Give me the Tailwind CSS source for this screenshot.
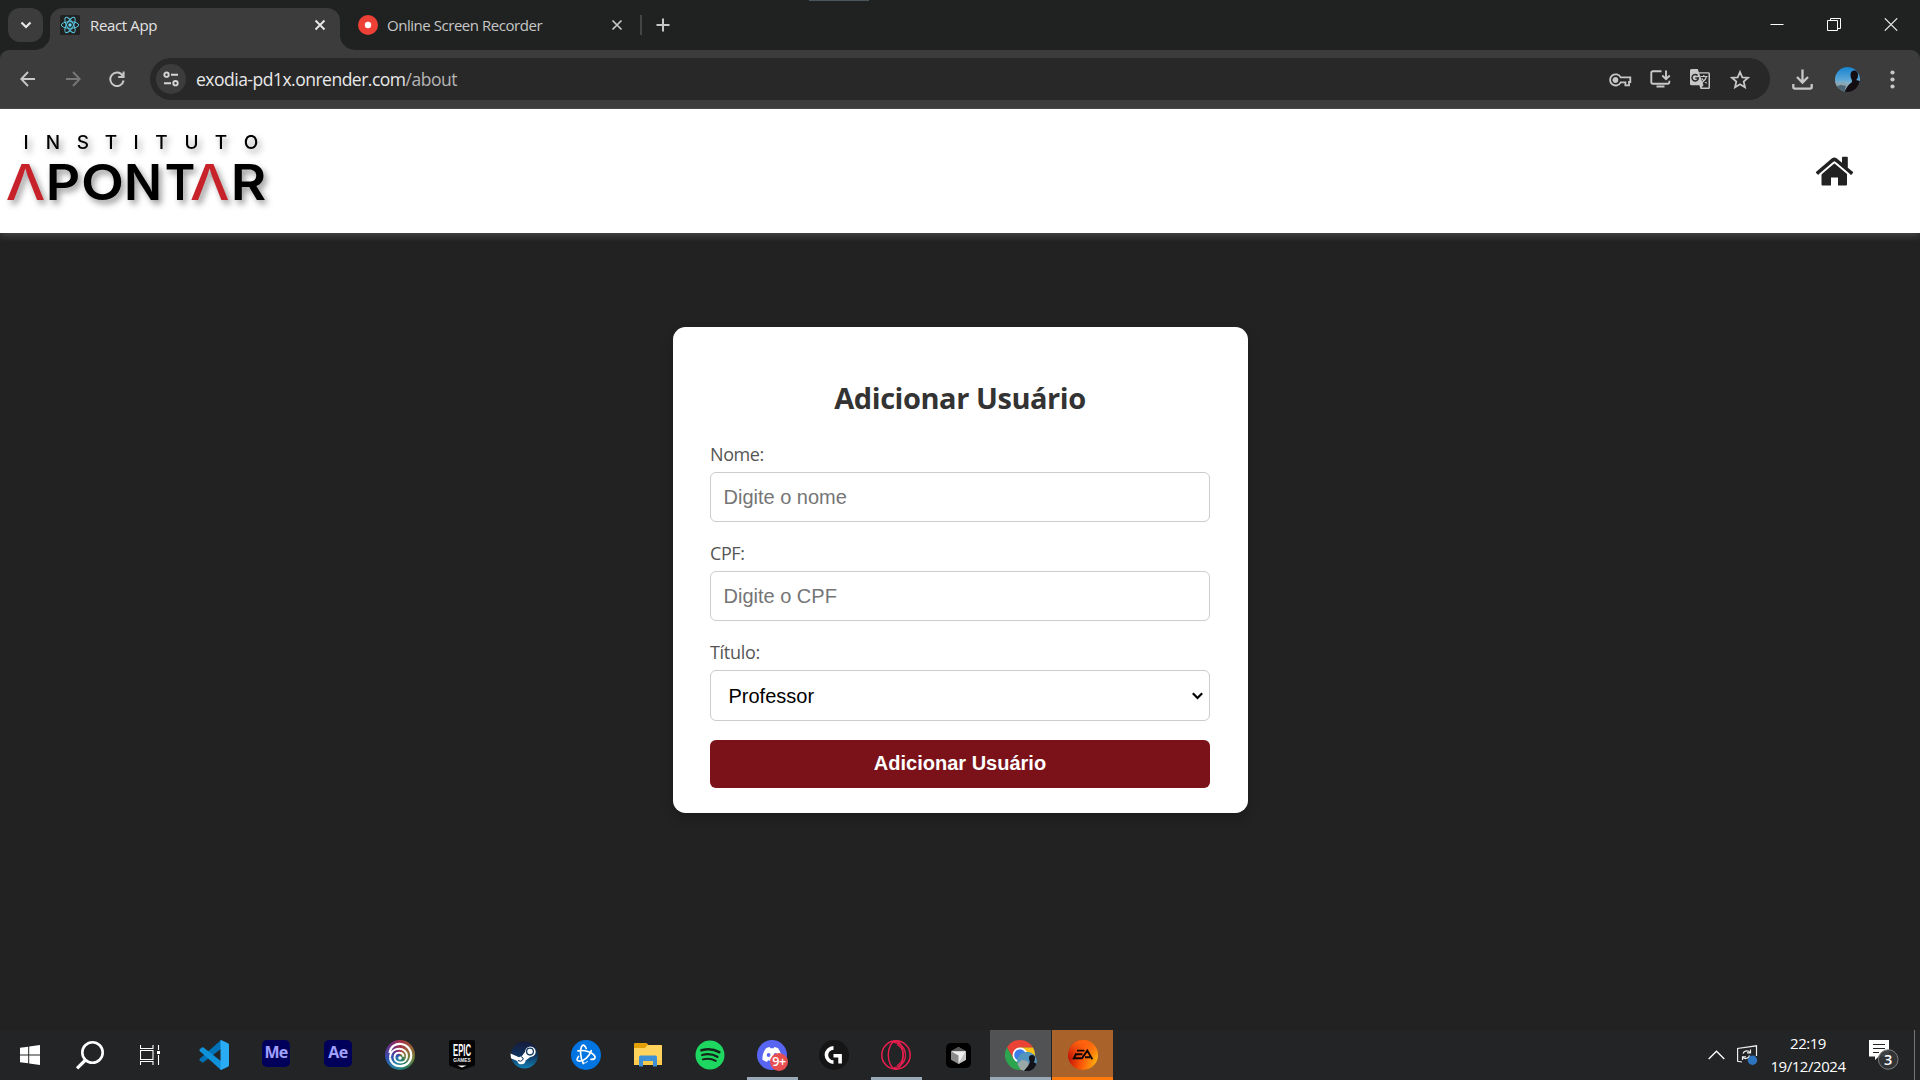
<!DOCTYPE html>
<html lang="pt-BR">
<head>
<meta charset="utf-8">
<title>React App</title>
<script src="https://cdn.jsdelivr.net/npm/@tailwindcss/browser@4"></script>
</head>
<body class="w-[1920px] h-[1080px] overflow-hidden bg-[#222] flex flex-col font-['Open_Sans','Noto_Sans',sans-serif] relative">

<!-- tab strip -->
<div class="h-[50px] shrink-0 bg-[#202222] flex items-start relative">
  <div class="absolute left-[809px] top-0 w-[60px] h-px bg-[#4b555c]"></div>
  <button class="ml-2 mt-2 w-[35px] h-[34px] rounded-[12px] bg-[#3c3c3c] flex items-center justify-center">
    <svg width="12" height="8" viewBox="0 0 12 8" fill="none" stroke="#e8e8e8" stroke-width="2.2"><path d="M1.5 1.5 6 6l4.500-4.500"/></svg>
  </button>
  <div class="ml-[7px] mt-2 w-[290px] h-[42px] rounded-t-[13px] bg-[#3c3c3c] flex items-center relative pb-2">
    <svg class="absolute -left-[15px] bottom-0" width="15" height="15"><path d="M15 0A15 15 0 0 1 0 15H15Z" fill="#3c3c3c"/></svg>
    <svg class="absolute -right-[15px] bottom-0" width="15" height="15"><path d="M0 0A15 15 0 0 0 15 15H0Z" fill="#3c3c3c"/></svg>
    <svg class="ml-[10px]" width="20" height="20" viewBox="0 0 20 20"><rect width="20" height="20" rx="1.500" fill="#222"/><g fill="none" stroke="#58c4dc" stroke-width="1"><ellipse cx="10" cy="10" rx="8.700" ry="3.300"/><ellipse cx="10" cy="10" rx="8.700" ry="3.300" transform="rotate(60 10 10)"/><ellipse cx="10" cy="10" rx="8.700" ry="3.300" transform="rotate(120 10 10)"/></g><circle cx="10" cy="10" r="1.700" fill="#61dafb"/></svg>
    <span class="ml-[10px] w-[200px] text-[15px] leading-5 text-[#e3e3e3] tracking-[-0.35px]">React App</span>
    <svg class="ml-[24px]" width="12" height="12" viewBox="0 0 12 12" stroke="#e8e8e8" stroke-width="1.900"><path d="M1.500 1.500l9 9M10.500 1.500l-9 9"/></svg>
  </div>
  <div class="ml-[18px] mt-2 h-[34px] flex items-center">
    <svg width="20" height="20" viewBox="0 0 20 20"><circle cx="10" cy="10" r="10" fill="#ee4136"/><circle cx="10" cy="10" r="3.200" fill="#fff"/></svg>
    <span class="ml-[9px] w-[201px] text-[15px] leading-5 text-[#c7c7c7] tracking-[-0.46px] whitespace-nowrap">Online Screen Recorder</span>
    <svg class="ml-[23px]" width="12" height="12" viewBox="0 0 12 12" stroke="#c7c7c7" stroke-width="1.700"><path d="M1.500 1.500l9 9M10.500 1.500l-9 9"/></svg>
    <div class="ml-[17px] w-[2px] h-5 bg-[#454545]"></div>
    <svg class="ml-[14px]" width="14" height="14" viewBox="0 0 14 14" stroke="#c7c7c7" stroke-width="2"><path d="M7 .5v13M.5 7h13"/></svg>
  </div>
  <div class="ml-auto mr-[22px] mt-[18px] flex items-center gap-[43px]">
    <svg width="14" height="13" viewBox="0 0 14 13"><path d="M.5 6.500h13" stroke="#fff"/></svg>
    <svg width="14" height="13" viewBox="0 0 14 13" fill="none" stroke="#fff"><path d="M.5 2.500h10v10H.5zM3.500 2.500V.5h10v10h-3"/></svg>
    <svg width="14" height="13" viewBox="0 0 14 13" stroke="#e5e5e5" stroke-width="1.200"><path d="M.8.300l12.400 12.400M13.200.300.800 12.700"/></svg>
  </div>
</div>

<!-- toolbar -->
<div class="bg-[#202222] shrink-0">
<div class="h-[59px] rounded-t-[9px] bg-[#3c3c3c] border-b border-[#484546] flex items-center relative">
  <svg class="ml-5" width="16" height="16" viewBox="0 0 16 16" fill="none" stroke="#c7c7c7" stroke-width="1.900"><path d="M15 8H1.500M8 1 1.300 8 8 15"/></svg>
  <svg class="ml-[29px]" width="16" height="16" viewBox="0 0 16 16" fill="none" stroke="#777" stroke-width="1.900"><path d="M1 8h13.500M8 1l6.700 7L8 15"/></svg>
  <svg class="ml-[28px]" width="16" height="16" viewBox="0 0 16 16" fill="none" stroke="#c7c7c7" stroke-width="2"><path d="M13.600 4.600A6.700 6.700 0 1 0 14.600 9.500M14.600.5v5.400H9.200"/></svg>
  <div class="ml-[25px] w-[1620px] h-[42px] rounded-full bg-[#282828] flex items-center">
    <div class="ml-[6px] w-[30px] h-[30px] rounded-full bg-[#3c3c3c] flex items-center justify-center">
      <svg width="16" height="16" viewBox="0 0 16 16" fill="none" stroke="#d5d5d5" stroke-width="1.900"><circle cx="3.500" cy="3.700" r="2.200"/><path d="M8 3.700h7M1 12.200h7"/><circle cx="12.500" cy="12.200" r="2.200"/></svg>
    </div>
    <span class="ml-[10px] w-[1402px] text-[17.5px] leading-6 tracking-[-0.5px] text-[#e8e8e8] whitespace-nowrap">exodia-pd1x.onrender.com<span class="text-[#b5b5b5]">/about</span></span>
    <svg class="mt-px ml-[11px]" width="23" height="14" viewBox="0 0 23 14" fill="none" stroke="#c7c7c7" stroke-width="1.800"><path d="M11.700 4.400H21.300V9H20v3.300h-3.600V9.400h-4.700A5.600 5.600 0 1 1 11.700 4.400Z"/><circle cx="6.400" cy="7" r="2" fill="#c7c7c7"/></svg>
    <svg class="ml-[18px]" width="21" height="18" viewBox="0 0 21 18" fill="none" stroke="#c7c7c7" stroke-width="1.900"><path d="M11.500 1.300H2.800a1.500 1.500 0 0 0-1.500 1.500v9.500a1.500 1.500 0 0 0 1.500 1.500h15a1.500 1.500 0 0 0 1.500-1.500v-1.500M16 .500v8.200M12.300 5.500 16 9.200l3.700-3.700M6.500 16.500h8"/></svg>
    <svg class="ml-[18px]" width="22" height="22" viewBox="0 0 22 22"><path d="M2.500 1h6.300l1 3.200h9.700A1.500 1.500 0 0 1 21 5.700v13.800a1.500 1.500 0 0 1-1.500 1.500h-8l-1.200-3.800H2.500A1.500 1.500 0 0 1 1 15.700V2.500A1.500 1.500 0 0 1 2.500 1Z" fill="#c7c7c7"/><path d="M10.300 5.500h9.200v14h-7l2-2.200Z" fill="#282828"/><path d="M8.600 7.600a3.200 3.200 0 1 0 .8 2.400H6.300" fill="none" stroke="#282828" stroke-width="1.500"/><path d="M11.500 8.500h7M14.800 7v1.500M17.500 8.500c-.6 2.500-2.400 4.700-4.500 6.200M12.800 10.200c1 2 2.600 3.700 5 5" fill="none" stroke="#c7c7c7" stroke-width="1.200"/></svg>
    <svg class="ml-[19px]" width="20" height="19" viewBox="0 0 20 19" fill="none" stroke="#c7c7c7" stroke-width="1.800"><path d="M10 2l2.300 5.300 5.800.5-4.400 3.800 1.300 5.700-5-3-5 3 1.300-5.700L1.900 7.800l5.800-.5Z"/></svg>
  </div>
  <svg class="ml-[22px]" width="21" height="21" viewBox="0 0 21 21" fill="none" stroke="#c7c7c7" stroke-width="2.300"><path d="M10.500.500v12.500M5 8l5.500 5.500L16 8M1.300 15v3a1.600 1.600 0 0 0 1.600 1.600h15.200a1.600 1.600 0 0 0 1.600-1.600v-3"/></svg>
  <svg class="ml-[22px]" width="25" height="25" viewBox="0 0 25 25"><defs><clipPath id="av"><circle cx="12.500" cy="12.500" r="12.500"/></clipPath><linearGradient id="sky" x2="0" y2="1"><stop stop-color="#1583cf"/><stop offset=".5" stop-color="#5ba6d6"/><stop offset=".75" stop-color="#9db9c4"/><stop offset="1" stop-color="#304454"/></linearGradient></defs><g clip-path="url(#av)"><path d="M0 0h25v25H0z" fill="url(#sky)"/><path d="M0 14l4 2 4-1 4 2 3 2-4 6H2z" fill="#8aa5b0"/><path d="M2 19l4-1 5 1-2 6H3z" fill="#4c6675"/><path d="M15.500 8q0-4.500 3.800-4.500T23 8q0 4-2 5l4 1v11H9l4.500-7 3.500-3V13q-1.500-2-1.500-5Z" fill="#130d12"/></g></svg>
  <svg class="ml-[30px]" width="5" height="19" viewBox="0 0 5 19" fill="#c7c7c7"><circle cx="2.500" cy="2.500" r="2.100"/><circle cx="2.500" cy="9.500" r="2.100"/><circle cx="2.500" cy="16.500" r="2.100"/></svg>
</div>
</div>

<!-- site header -->
<header class="h-[124px] shrink-0 bg-white shadow-[0_2px_8px_rgba(255,255,255,0.2)] flex justify-between">
  <svg class="drop-shadow-[3px_4px_3px_rgba(0,0,0,0.4)]" width="300" height="124" viewBox="0 109 300 124" font-family="Inter, sans-serif">
    <text y="149.300" font-size="19" font-weight="500" text-anchor="middle"><tspan x="26">I</tspan><tspan x="53">N</tspan><tspan x="83">S</tspan><tspan x="111">T</tspan><tspan x="136">I</tspan><tspan x="161.500">T</tspan><tspan x="191.500">U</tspan><tspan x="221">T</tspan><tspan x="251">O</tspan></text>
    <g font-size="50" font-weight="600">
      <text x="5.700" y="199.500" fill="#c7222a" font-weight="500" textLength="39.500" lengthAdjust="spacingAndGlyphs">Λ</text>
      <text x="45.800" y="199.500" textLength="34.500" lengthAdjust="spacingAndGlyphs">P</text>
      <text x="81" y="199.500" textLength="43" lengthAdjust="spacingAndGlyphs">O</text>
      <text x="124" y="199.500" textLength="38" lengthAdjust="spacingAndGlyphs">N</text>
      <text x="164.800" y="199.500" textLength="30.500" lengthAdjust="spacingAndGlyphs">T</text>
      <text x="190" y="199.500" fill="#c7222a" font-weight="500" textLength="39.500" lengthAdjust="spacingAndGlyphs">Λ</text>
      <text x="230.800" y="199.500" textLength="35.500" lengthAdjust="spacingAndGlyphs">R</text>
    </g>
  </svg>
  <svg class="mt-[47px] mr-[66px]" width="39" height="32" viewBox="0 0 39 32" fill="#222"><path d="M6.500 16.500 19.500 6.200l12.500 10.300V28.500a1 1 0 0 1-1 1h-8V21.500h-7v8h-8.500a1 1 0 0 1-1-1Z"/><path d="M1.200 15.800 17 2.300q2.300-1.800 4.600 0l5.400 4.400V1.500a.8.800 0 0 1 .8-.8h4.200a.8.800 0 0 1 .8.800v10.200l5 4.100q.7.600.1 1.300l-1.500 1.700q-.6.600-1.300 0L20 5.800q-.6-.5-1.200 0L4 18.600q-.7.600-1.300 0L1.100 17Q.5 16.400 1.200 15.800Z"/><path d="M4 19.300 18.700 6.800q.7-.6 1.400 0L35 19.300" fill="none" stroke="#fff" stroke-width="1.800"/></svg>
</header>

<!-- user form -->
<main class="flex-1 flex flex-col items-center pt-[94px]">
  <form class="w-[575px] h-[486px] bg-white rounded-[12.5px] shadow-[0_5px_12px_rgba(0,0,0,0.2)] px-[37.5px] pt-[51px] flex flex-col">
    <h2 class="text-center text-[29px] leading-10 font-bold text-[#333] tracking-[-0.45px]">Adicionar Usuário</h2>
    <label class="mt-[24px] h-[25px] text-[18px] leading-[25px] text-[#555] tracking-[-0.4px]">Nome:</label>
    <input class="mt-[5px] h-[50px] border border-[#ccc] rounded-[6px] px-[12.5px] font-['Liberation_Sans',sans-serif] text-[20px] placeholder:text-[#757575]" placeholder="Digite o nome">
    <label class="mt-[19px] h-[25px] text-[18px] leading-[25px] text-[#555] tracking-[-0.4px]">CPF:</label>
    <input class="mt-[5px] h-[50px] border border-[#ccc] rounded-[6px] px-[12.5px] font-['Liberation_Sans',sans-serif] text-[20px] placeholder:text-[#757575]" placeholder="Digite o CPF">
    <label class="mt-[19px] h-[25px] text-[18px] leading-[25px] text-[#555] tracking-[-0.3px]">Título:</label>
    <div class="mt-[5px] h-[51px] shrink-0 border border-[#ccc] rounded-[6px] pl-[17.5px] pr-[6px] flex items-center justify-between font-['Liberation_Sans',sans-serif] text-[20px] text-black">Professor
      <svg width="11" height="8" viewBox="0 0 11 8" fill="none" stroke="#000" stroke-width="2.200"><path d="M.8 1.300l4.700 4.700 4.700-4.700"/></svg>
    </div>
    <button class="mt-[19px] h-[48px] shrink-0 rounded-[6px] bg-[#7b1119] text-white font-bold text-[20px] font-['Liberation_Sans',sans-serif] pb-[2px]" type="button">Adicionar Usuário</button>
  </form>
</main>

<!-- taskbar -->
<footer class="h-[50px] shrink-0 bg-[#222426] flex text-white">
  <div class="w-[60px] flex items-center justify-center"><svg width="20" height="20" viewBox="0 0 20 20" fill="#fff"><path d="M0 2.800 8.200 1.700V9.500H0zM9.200 1.500 20 0v9.500H9.200zM0 10.500h8.200v7.800L0 17.200zM9.200 10.500H20V20L9.200 18.500z"/></svg></div>
  <div class="w-[60px] flex items-center justify-center"><svg width="30" height="30" viewBox="0 0 30 30" fill="none" stroke="#fff" stroke-width="2.600"><circle cx="17.500" cy="12.500" r="10.200"/><path d="M10.500 20 2 28.300" stroke-width="3.200"/></svg></div>
  <div class="w-[61px] mr-[2px] flex items-center justify-center"><svg width="21" height="20" viewBox="0 0 21 20" fill="none" stroke="#fff" stroke-width="1.100"><path d="M.5 0v3.500h12.500V0M.5 20v-3.500h12.500V20M.5 5.500h12.500v9H.5zM18.500 0v5M18.500 10v10"/><path d="M17 6h3v3h-3z" fill="#fff" stroke="none"/></svg></div>
  <div class="w-[62px] flex items-center justify-center"><svg width="30" height="30" viewBox="0 0 30 30"><path d="M22 0 1 18.500q-1.300 1.200 0 2.300l1.800 1.500q.8.600 1.700 0L22.500 8.500z" fill="#0072b8"/><path d="M22 30 1 11.300Q-.2 10.200 1 9.100l1.800-1.600q.8-.6 1.700 0L22.500 21.500z" fill="#0f92da"/><path d="M22 30q-.8-.5-.5-1.500V1.500Q21.300.400 22 0l7 3.300q1 .5 1 1.600v20.200q0 1.100-1 1.600z" fill="#29acf3"/></svg></div>
  <div class="w-[62px] flex items-center justify-center"><div class="w-[28px] h-[27px] mb-[3px] rounded-[5px] bg-[#00005b] text-[#a0a0ff] text-[16px] font-bold leading-[25px] text-center tracking-[-0.8px]">Me</div></div>
  <div class="w-[62px] flex items-center justify-center"><div class="w-[28px] h-[27px] mb-[3px] rounded-[5px] bg-[#00005b] text-[#a0a0ff] text-[16px] font-bold leading-[25px] text-center tracking-[-0.5px]">Ae</div></div>
  <!-- Ubisoft -->
  <div class="w-[62px] flex items-center justify-center"><div class="w-[30px] h-[30px] rounded-full bg-[conic-gradient(#a53048,#9a5b35,#74803a,#287d63,#2585a8,#314fae,#68308c,#a53048)]"><svg width="30" height="30" viewBox="0 0 30 30" fill="none" stroke="#fff"><path d="M4.500 13C5.500 6 11 3.500 16 4c6 .5 10.200 5.500 10.200 11.500 0 6-4.700 10.700-11 10.700C9 26.200 5 22 5 17.500" stroke-width="2.200"/><path d="M5 17.500C5 12 9 8.800 14 8.800c4.500 0 8 3 8 7.200s-3 6.500-6.500 6.500-6-2-6-5 2-4.700 4.700-4.700 4.300 1.600 4.300 4" stroke-width="1.900"/><circle cx="15" cy="18" r="1.800" fill="#fff" stroke="none"/></svg></div></div>
  <!-- Epic Games -->
  <div class="w-[62px] flex items-center justify-center"><svg width="26" height="30" viewBox="0 0 26 30"><path d="M2 0h22a2 2 0 0 1 2 2v22.500q0 1-1 1.500L13 30 1 26q-1-.5-1-1.500V2a2 2 0 0 1 2-2Z" fill="#050505"/><text x="4" y="15.500" font-family="Liberation Sans" font-weight="700" font-size="16" fill="#fff" textLength="18" lengthAdjust="spacingAndGlyphs">EPIC</text><text x="4.200" y="21.800" font-family="Liberation Sans" font-weight="700" font-size="5" fill="#eee" textLength="17.500" lengthAdjust="spacingAndGlyphs">GAMES</text><path d="M8.500 25.500h9L13 27.500z" fill="#fff"/></svg></div>
  <!-- Steam -->
  <div class="w-[62px] flex items-center justify-center"><svg width="30" height="30" viewBox="0 0 30 30"><defs><linearGradient id="st" x2="0" y2="1"><stop stop-color="#151a3c"/><stop offset=".5" stop-color="#10335c"/><stop offset="1" stop-color="#1282b5"/></linearGradient></defs><circle cx="15.500" cy="15" r="13.500" fill="url(#st)"/><path d="M1.500 13.500 10 17.200q1.500-.8 2.600-.6l3.500-4.800a5.300 5.300 0 1 1 5.200 5.300l-4.700 3.300A4.200 4.200 0 0 1 8.300 21L2 18.300Z" fill="#fff"/><circle cx="21" cy="11.600" r="3.400" fill="#fff" stroke="#14395f" stroke-width="1.300"/><path d="M9 20.500q3 1.800 4.700-.5t-1.500-3.300" fill="none" stroke="#14395f"/></svg></div>
  <!-- Battle.net -->
  <div class="w-[62px] flex items-center justify-center"><svg width="30" height="30" viewBox="0 0 30 30" fill="none" stroke="#fff"><circle cx="15" cy="15" r="15" fill="#0074e0" stroke="none"/><g stroke-width="1.700" stroke-linecap="round"><path d="M12.300 23.500C9.200 18 8.600 9 11.200 5.700c1.500-1.500 3 .3 4 2.800"/><path d="M7 10.800c7-1.300 15.500 2 17 6 .7 2-1.500 2.700-4 2.500"/><path d="M20.300 10.500C18.500 16.500 12.500 21.800 7.500 21c-2.200-.5-1.500-2.700 0-4.500"/><path d="M12.300 23.500q2.500-.5 4.200-2" stroke-width="1"/></g></svg></div>
  <!-- File Explorer -->
  <div class="w-[62px] flex items-center justify-center"><svg width="28" height="24" viewBox="0 0 28 24"><path d="M0 1q0-1 1-1h11.500l2 2H27q1 0 1 1v5H0z" fill="#e3a007"/><path d="M0 5h11l2.500-3H27q1 0 1 1v19H0z" fill="#ffd35c"/><path d="M0 17h28v5H0z" fill="#fcca4c"/><path d="M5 23.500V14q0-1.500 1.500-1.500h15q1.500 0 1.500 1.500v9.500h-4V18h-10v5.500z" fill="#3e91d6"/></svg></div>
  <!-- Spotify -->
  <div class="w-[62px] flex items-center justify-center"><svg width="30" height="30" viewBox="0 0 30 30" fill="none" stroke="#16251b" stroke-linecap="round"><circle cx="15" cy="15" r="14.500" fill="#1ed760" stroke="none"/><path d="M6.500 10.300c6-1.700 12.500-1.200 17.700 1.900" stroke-width="2.700"/><path d="M7.200 15c5.300-1.500 10.700-.9 15.200 1.800" stroke-width="2.300"/><path d="M7.800 19.400c4.500-1.200 9-.8 12.900 1.500" stroke-width="1.900"/></svg></div>
  <!-- Discord -->
  <div class="w-[62px] flex items-center justify-center relative"><svg width="30" height="30" viewBox="0 0 30 30"><circle cx="15" cy="15" r="15" fill="#5865f2"/><path d="M9 8.200q1.800-.9 3.700-1.200l.7 1.300h3.300l.7-1.300q1.900.3 3.700 1.200c2.800 4 3.700 7.500 3.400 11.500q-2 1.600-4.500 2.200l-1-1.700q-4 1.300-8 0l-1 1.700q-2.500-.6-4.500-2.200C5.200 15.500 6.200 12 9 8.200Z" fill="#fff"/><ellipse cx="11.600" cy="15" rx="1.900" ry="2.100" fill="#5865f2"/><ellipse cx="18.500" cy="15" rx="1.900" ry="2.100" fill="#5865f2"/></svg><div class="absolute left-[29px] top-[23px] w-[18px] h-[18px] rounded-full bg-[#e84f50] text-[12.500px] font-semibold leading-[17px] text-center tracking-[-0.3px]">9+</div><div class="absolute left-[6px] bottom-0 w-[51px] h-[3px] bg-[#9aa9b8]"></div></div>
  <!-- Logitech G -->
  <div class="w-[62px] flex items-center justify-center"><svg width="30" height="30" viewBox="0 0 30 30" fill="none" stroke="#fff" stroke-width="3.600"><circle cx="15" cy="15" r="15" fill="#151515" stroke="none"/><path d="M14.500 7.900a7 7 0 0 0 0 14.200M14.500 15.800h6.600v7.700"/></svg></div>
  <!-- Opera GX -->
  <div class="w-[62px] flex items-center justify-center relative"><svg width="30" height="30" viewBox="0 0 30 30" fill="none" stroke="#ee1e4f"><circle cx="15" cy="15" r="14.200" stroke-width="1.500"/><ellipse cx="14.800" cy="15" rx="7.500" ry="13.800" stroke-width="1.400"/><path d="M13 2.300C21 4 24.500 9 24.500 15S21 26 13 27.700M16 4.500c4 2 6 6 6 10.500s-2 8.500-6 10.500" stroke-width="1.100"/></svg><div class="absolute left-[6px] bottom-0 w-[51px] h-[3px] bg-[#9aa9b8]"></div></div>
  <!-- Cursor -->
  <div class="w-[62px] flex items-center justify-center"><svg width="25" height="25" viewBox="0 0 25 25"><rect width="25" height="25" rx="5" fill="#000"/><path d="M12.500 4 20 8.300v8.400L12.500 21 5 16.700V8.300z" fill="#8a8a8a"/><path d="M5 8.300 12.500 4 20 8.300z" fill="#555"/><path d="M5 8.300h15L12.500 21v-8.500z" fill="#eee"/><path d="M20 8.300v8.400L12.500 21z" fill="#c5c5c5"/></svg></div>
  <!-- Chrome -->
  <div class="ml-px w-[61px] bg-[#515254] flex items-center justify-center relative"><svg width="32" height="32" viewBox="-15 -16 32 32"><path d="M0-15A15 15 0 0 1 13-7.500H0L-6.500 3.750-13-7.500A15 15 0 0 1 0-15Z" fill="#ea4335"/><path d="M13-7.500A15 15 0 0 1 0 15L6.500 3.750 0-7.500Z" fill="#fbc116"/><path d="M-13-7.500A15 15 0 0 0 0 15L6.500 3.750-6.500 3.750Z" fill="#2da44e"/><circle r="7.500" fill="#fff"/><circle r="5.800" fill="#3a7de8"/><clipPath id="c2"><circle cx="7" cy="6.500" r="9.800"/></clipPath><g clip-path="url(#c2)"><path d="M-3-4h20v21H-3z" fill="#5194bd"/><path d="M-3 9 2 5l5 1 3 4v7H-3z" fill="#9aa9a8"/><path d="M9 3q0-3 3-3t3 3q0 3-1.500 4l3.500 2v8H3l5-6 2-4Q9 5 9 3Z" fill="#131218"/></g></svg><div class="absolute inset-x-0 bottom-0 h-[3px] bg-[#9aa9b8]"></div></div>
  <!-- EA -->
  <div class="ml-px w-[61px] bg-[#a9622a] flex items-center justify-center relative"><svg width="30" height="30" viewBox="0 0 30 30"><defs><linearGradient id="ea" x1="0" y1=".6" x2="1" y2=".8"><stop stop-color="#c00f05"/><stop offset=".45" stop-color="#fb5608"/><stop offset="1" stop-color="#ffb80e"/></linearGradient><linearGradient id="ea2" x2="0" y2="1"><stop stop-color="#ff6410"/><stop offset=".6" stop-color="#ff6410" stop-opacity="0"/></linearGradient></defs><circle cx="15" cy="15" r="15" fill="url(#ea)"/><circle cx="15" cy="15" r="15" fill="url(#ea2)"/><path d="M9 10.600h7.500M7 14.300h7.500M7.800 14.500 5.800 18.300h8.200L19.300 10.600l5 8.700M17 17.300h5" fill="none" stroke="#120605" stroke-width="1.900"/></svg><div class="absolute inset-x-0 bottom-0 h-[3px] bg-[#ff7a0c]"></div></div>

  <!-- system tray -->
  <div class="ml-auto flex items-center">
    <svg width="17" height="10" viewBox="0 0 17 10" fill="none" stroke="#fff" stroke-width="1.300"><path d="M.7 9 8.500 1.200 16.300 9"/></svg>
    <svg class="ml-[12px]" width="21" height="20" viewBox="0 0 21 20" fill="none" stroke="#eee" stroke-width="1.200"><path d="M19.500 11V.8L.6 3.500v12.800L5 17"/><path d="M6 8.500a4 4 0 0 1 7-1M13.500 4.500v3.300H10M12.500 10.500a4 4 0 0 1-7 1.500M5.500 15v-3.200H9"/><circle cx="15.500" cy="15.300" r="4.700" fill="#2e75c0" stroke="none"/></svg>
    <div class="ml-[12px] w-[76px] text-center text-[15px] leading-[23px] tracking-[-0.45px] whitespace-nowrap"><div>22:19</div><div>19/12/2024</div></div>
    <div class="ml-[23px] w-[30px] h-[30px] relative"><svg width="30" height="30" viewBox="0 0 30 30"><path d="M0 0h20v16.500H9.500L6 20v-3.500H0z" fill="#fff"/><path d="M4 4.500h12M4 8.500h12M4 12.500h6" stroke="#222" stroke-width="1.100"/><circle cx="19.200" cy="19.500" r="9.800" fill="#333537" fill-opacity=".94" stroke="#7d7f80"/><text x="19.200" y="24.800" text-anchor="middle" font-family="Open Sans" font-weight="600" font-size="14.500" fill="#fff">3</text></svg></div>
    <div class="ml-[15px] mr-[5px] w-px h-[50px] bg-[#777]"></div>
  </div>
</footer>
</body>
</html>
